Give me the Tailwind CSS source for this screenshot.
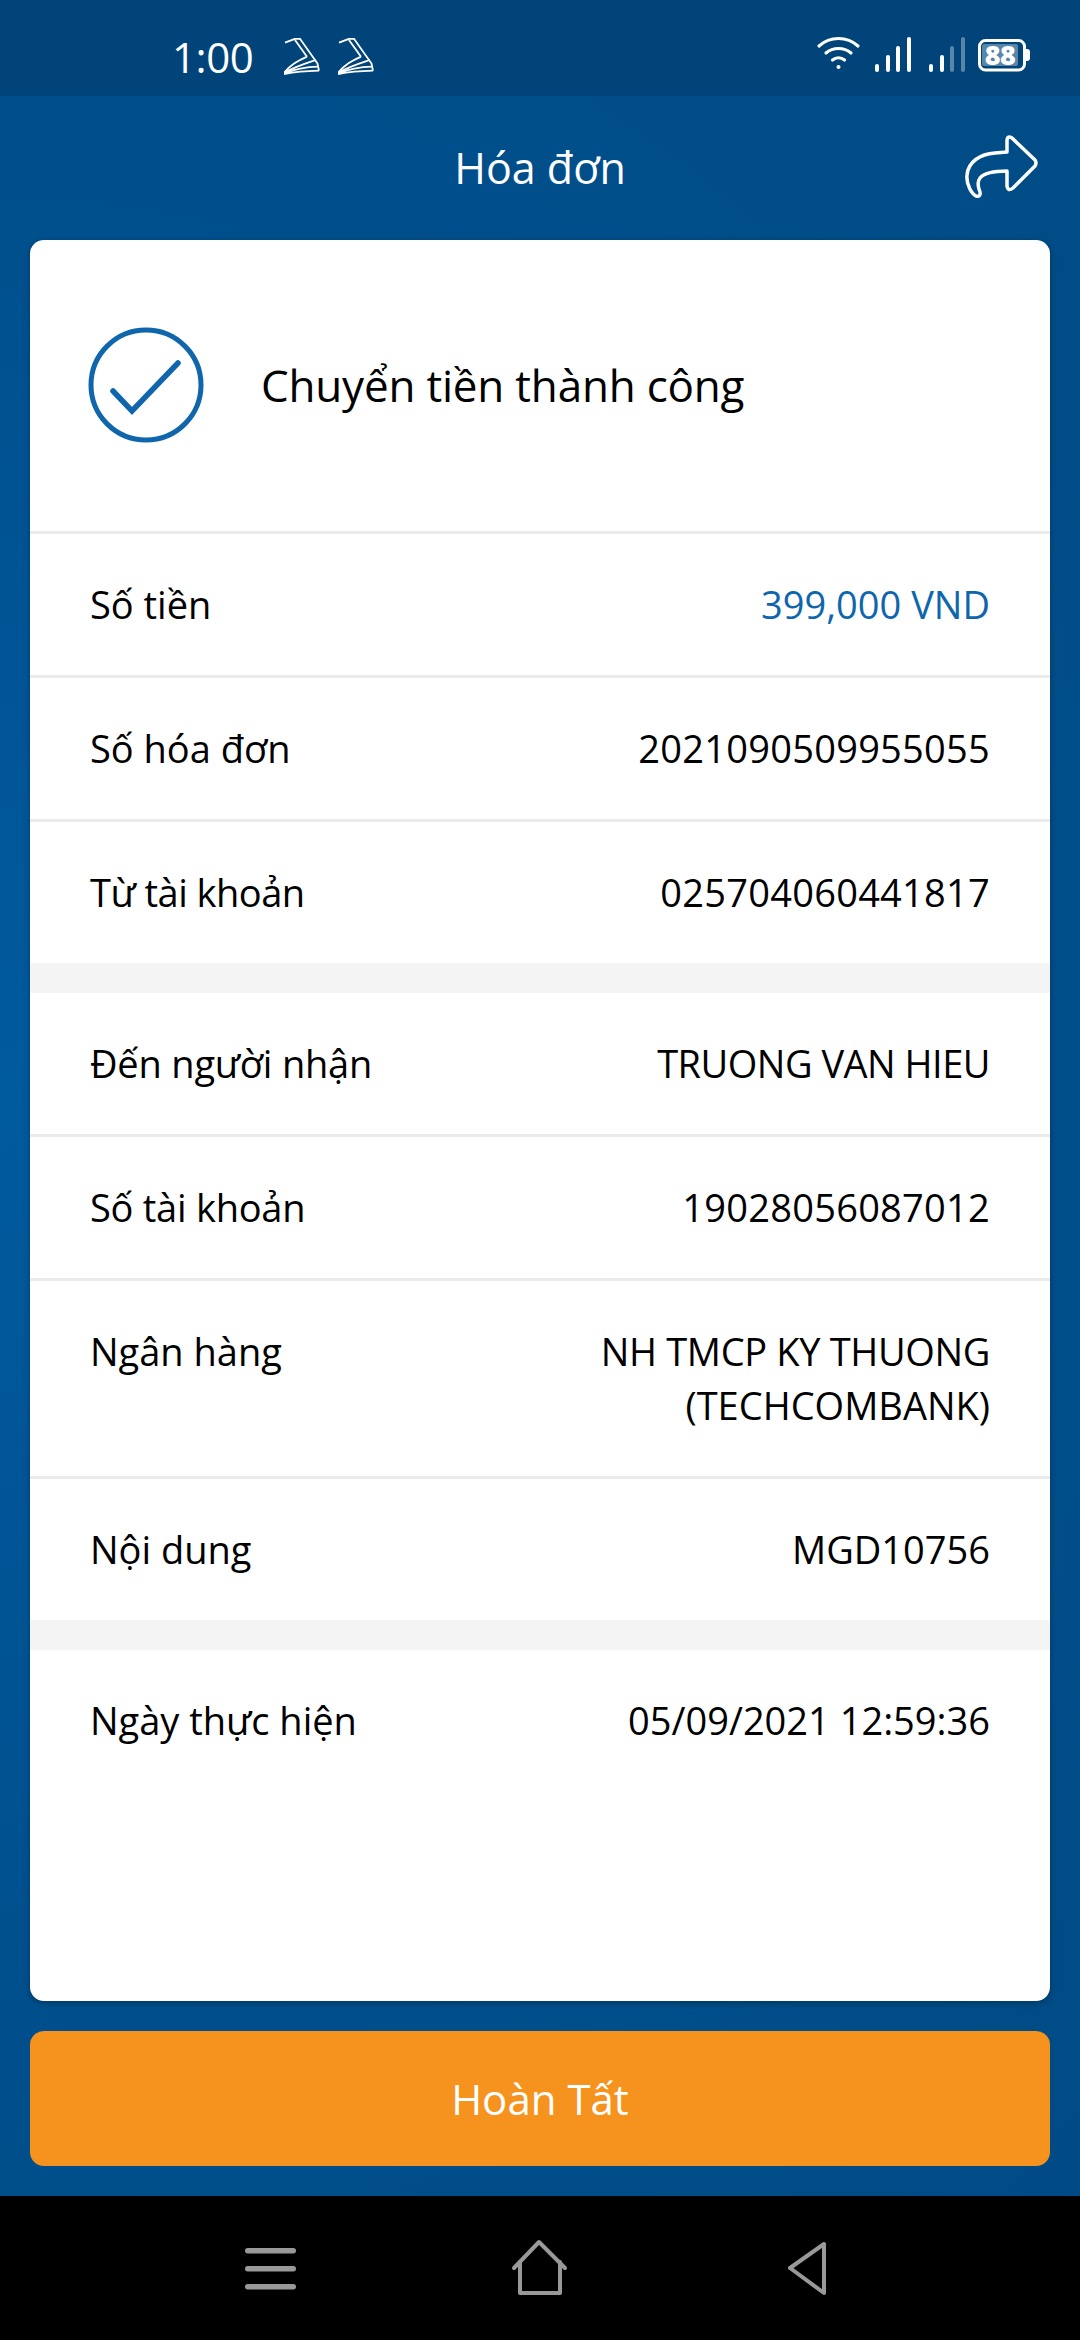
<!DOCTYPE html>
<html>
<head>
<meta charset="utf-8">
<script src="https://cdn.jsdelivr.net/npm/@tailwindcss/browser@4"></script>
</head>
<body class="m-0">
<div class="w-[1080px] h-[2340px] flex flex-col overflow-hidden bg-black font-['Open_Sans','Noto_Sans',sans-serif]">
  <div class="h-[2196px] flex flex-col bg-[radial-gradient(ellipse_at_0%_50%,#005a9e_0%,#004f8c_60%,#004b85_100%)]">
    <!-- status bar -->
    <div class="h-[96px] bg-[#00447a] flex items-start text-white">
      <span class="ml-[172px] mt-[33px] text-[42px] leading-[48px] tracking-[-0.4px]">1:00</span>
      <svg class="ml-[31px] mt-[38px]" width="37" height="37" viewBox="0 0 37 37" fill="none" stroke="#fff" stroke-width="1.800"><path d="M1 4.700 L11 .8 H16 L33.500 25.500 L35 32.700"/><path d="M11 2 L23 18.700"/><path d="M0 35 C7 26 14 23 23 18.700"/><path d="M0 35 C10 29 20 26 32 22"/><path d="M0 35.500 C11 31 22 29 34 28.700"/><path d="M0 36 C11 34 24 33 35 32.700"/></svg>
      <svg class="ml-[17px] mt-[38px]" width="37" height="37" viewBox="0 0 37 37" fill="none" stroke="#fff" stroke-width="1.800"><path d="M1 4.700 L11 .8 H16 L33.500 25.500 L35 32.700"/><path d="M11 2 L23 18.700"/><path d="M0 35 C7 26 14 23 23 18.700"/><path d="M0 35 C10 29 20 26 32 22"/><path d="M0 35.500 C11 31 22 29 34 28.700"/><path d="M0 36 C11 34 24 33 35 32.700"/></svg>
      <svg class="ml-auto mr-[48px] mt-[32px]" width="220" height="44" viewBox="812 32 220 44" fill="none">
        <g stroke="#fff" stroke-linecap="round" stroke-width="3.200">
          <path d="M819 46 C830 36 847 36 858 46"/>
          <path d="M826 53 C833 47 844 47 851 53"/>
          <path d="M832.500 60 C836 57 841 57 844.500 60"/>
        </g>
        <circle cx="838.500" cy="67" r="2" fill="#fff"/>
        <g fill="#fff">
          <rect x="875" y="64" width="4" height="8" rx="2"/><rect x="886" y="55" width="4" height="17" rx="2"/><rect x="896" y="46" width="4" height="26" rx="2"/><rect x="907" y="37" width="4" height="35" rx="2"/>
          <rect x="929" y="64" width="4" height="8" rx="2"/><rect x="940" y="55" width="4" height="17" rx="2"/><rect x="950" y="46" width="4" height="26" rx="2" opacity=".35"/><rect x="961" y="37" width="4" height="35" rx="2" opacity=".35"/>
        </g>
        <rect x="979.500" y="40.500" width="45" height="29.500" rx="6" stroke="#fff" stroke-width="3"/>
        <rect x="982" y="44" width="36" height="22" rx="2" fill="#fff" opacity=".35"/>
        <text x="1000" y="65" text-anchor="middle" fill="#fff" font-family="'Open Sans',sans-serif" font-weight="800" font-size="27" letter-spacing="-.5">88</text>
        <path d="M1026 49h1a3 3 0 0 1 3 3v6a3 3 0 0 1-3 3h-1z" fill="#fff"/>
      </svg>
    </div>
    <!-- title bar -->
    <div class="relative h-[144px] flex items-center justify-center text-white text-[43px] leading-none">
      <span class="-mt-[2px]">Hóa đơn</span>
      <svg class="absolute left-[960px] top-[34px]" width="84" height="72" viewBox="960 130 84 72" fill="none" stroke="#fff" stroke-width="3.500" stroke-linejoin="round"><path d="M1007 141 Q1007 135 1012 138 L1035 160 Q1037 163 1035 166 L1013 188 Q1008 192 1007 186 L1007 171 C995 171 985 172 980 178 C976 183 979 189 980 192 Q981 197 976 196 C972 194 966 185 967 175 C968 162 980 154 995 153 L1007 152 Z"/></svg>
    </div>
    <!-- card -->
    <div class="mx-[30px] h-[1761px] shrink-0 rounded-[14px] bg-white shadow-[0_2px_6px_rgba(0,0,0,0.3)] flex flex-col overflow-hidden text-black text-[38px] leading-[54px]">
      <div class="h-[294px] shrink-0 flex items-center border-b-[3px] border-[#ebebeb]">
        <svg class="ml-[58px] -mt-[1px]" width="116" height="116" viewBox="0 0 116 116" fill="none" stroke="#0f66ac" stroke-width="5"><circle cx="58" cy="58" r="55"/><path d="M25 64 L44 84 L90 36" stroke-linecap="round" stroke-width="5.500"/></svg>
        <span class="ml-[57px] text-[44px] tracking-[-0.2px] -mt-[2px]">Chuyển tiền thành công</span>
      </div>
      <div class="flex justify-between px-[60px] pt-[43px] pb-[44px] border-b-[3px] border-[#ebebeb]"><span>Số tiền</span><span class="text-[#0f66ac]">399,000 VND</span></div>
      <div class="flex justify-between px-[60px] pt-[43px] pb-[44px] border-b-[3px] border-[#ebebeb]"><span>Số hóa đơn</span><span class="tracking-[0.25px]">2021090509955055</span></div>
      <div class="flex justify-between px-[60px] pt-[43px] pb-[44px]"><span class="tracking-[-0.5px]">Từ tài khoản</span><span class="tracking-[0.25px]">025704060441817</span></div>
      <div class="h-[30px] shrink-0 bg-[#f4f4f4]"></div>
      <div class="flex justify-between px-[60px] pt-[43px] pb-[44px] border-b-[3px] border-[#ebebeb]"><span class="tracking-[-0.2px]">Đến người nhận</span><span class="tracking-[-0.5px]">TRUONG VAN HIEU</span></div>
      <div class="flex justify-between px-[60px] pt-[43px] pb-[44px] border-b-[3px] border-[#ebebeb]"><span class="tracking-[-0.25px]">Số tài khoản</span><span class="tracking-[0.25px]">19028056087012</span></div>
      <div class="flex justify-between px-[60px] pt-[43px] pb-[44px] border-b-[3px] border-[#ebebeb]"><span>Ngân hàng</span><span class="text-right"><span class="tracking-[-0.35px]">NH TMCP KY THUONG</span><br>(TECHCOMBANK)</span></div>
      <div class="flex justify-between px-[60px] pt-[43px] pb-[44px]"><span>Nội dung</span><span>MGD10756</span></div>
      <div class="h-[30px] shrink-0 bg-[#f4f4f4]"></div>
      <div class="flex justify-between px-[60px] pt-[43px] pb-[44px]"><span>Ngày thực hiện</span><span>05/09/2021 12:59:36</span></div>
    </div>
    <!-- button -->
    <div class="mx-[30px] mt-[30px] h-[135px] shrink-0 rounded-[14px] bg-[#f6931e] flex items-center justify-center text-white text-[42px] leading-none">Hoàn Tất</div>
  </div>
  <!-- nav bar -->
  <div class="flex-1 bg-black flex items-start">
    <svg class="ml-[245px] mt-[52px]" width="52" height="42" viewBox="0 0 52 42"><g fill="#999"><rect x="0" y="0" width="51" height="5.500" rx="2.750"/><rect x="0" y="18" width="51" height="5.500" rx="2.750"/><rect x="0" y="36" width="51" height="5.500" rx="2.750"/></g></svg>
    <svg class="ml-[214px] mt-[42px]" width="60" height="60" viewBox="0 0 60 60" fill="none" stroke="#999" stroke-width="4" stroke-linejoin="round" stroke-linecap="round"><path d="M3 30 L28 4 L54 30"/><path d="M9 24 V55 H49 V24"/></svg>
    <svg class="ml-[217px] mt-[45px]" width="42" height="56" viewBox="0 0 42 56" fill="none" stroke="#999" stroke-width="4" stroke-linejoin="round"><path d="M36 3 V52 L2 27 Z"/></svg>
  </div>
</div>
</body>
</html>
